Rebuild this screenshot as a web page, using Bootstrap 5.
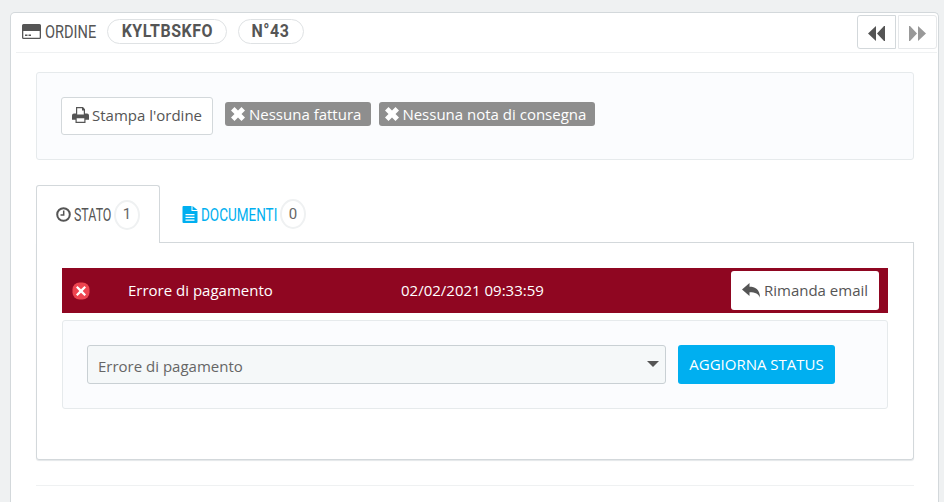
<!DOCTYPE html>
<html lang="it">
<head>
  <meta charset="UTF-8">
  <title>Ordine</title>
  <link href="https://cdn.jsdelivr.net/npm/bootstrap@5.3.3/dist/css/bootstrap.min.css" rel="stylesheet">
  <style>
    html, body { height: 100%; overflow: hidden; }
    body { background: #eff1f2; font-family: "Open Sans", sans-serif; font-size: 15px; color: #555; padding: 12px 5px 0 10px; }
    .order-panel { background: #fff; border: 1px solid #d3d8db; border-bottom: 0; border-radius: 5px 5px 0 0; height: 100%; padding: 0 1px 0 5px; }
    .panel-head { height: 40px; border-bottom: 1px solid #eff1f2; padding: 0 0 2px 6px; }
    /* no condensed face installed: Roboto squeezed to the widths of the reference */
    .narrow { font-family: Roboto, sans-serif; white-space: nowrap; display: inline-block; transform-origin: left center; }
    .head-title { font-size: 18px; color: #555; width: 51px; margin: 0 11px 0 4px; transform: scaleX(.81); }
    .pill-ref { border: 1px solid #dfe2e4; border-radius: 13px; height: 25px; width: 120px; }
    .pill-num { width: 66px; margin-left: 11px; }
    .pill-ref .narrow { font-size: 19px; font-weight: 700; color: #555; letter-spacing: .6px; transform: scaleX(.84); transform-origin: center; }
    .nav-btn { width: 39px; height: 34px; background: #fff; border: 1px solid #d3d8db; border-radius: 3px 0 0 3px; }
    .nav-btn + .nav-btn { border-color: #e6e8ea; border-radius: 0 3px 3px 0; margin-left: 2px; }
    .soft-well { background: #fbfcfe; border: 1px solid #e6eaec; border-radius: 3px; }
    .well-top { margin: 19px 0 0 20px; width: 878px; height: 88px; padding-left: 24px; }
    .print-btn { height: 38px; width: 152px; background: #fff; border: 1px solid #d3d8db; border-radius: 3px; color: #555; font-size: 15px; padding: 0 0 2px; gap: 3px; }
    .grey-tag { background: #8e8e8e; color: #fff; height: 24px; border-radius: 3px; padding: 0 10px 0 6px; font-size: 15px; margin: 0 0 4px 12px; gap: 4px; }
    .grey-tag + .grey-tag { margin-left: 8px; padding-right: 9px; gap: 3px; }
    .tab-row { margin: 25px 0 0 20px; width: 878px; height: 58px; border-bottom: 1px solid #d3d8db; }
    .tab-item { height: 58px; padding-left: 19px; font-size: 18px; }
    .tab-on { width: 124px; background: #fff; border: 1px solid #d3d8db; border-bottom: 0; border-radius: 3px 3px 0 0; color: #555; }
    .tab-off { color: #00aff0; padding-left: 22px; }
    .tab-on .narrow { width: 37px; transform: scaleX(.69); }
    .tab-off .narrow { width: 76px; transform: scaleX(.75); }
    .tab-icon { margin-right: 3px; }
    .count-dot { width: 26px; height: 30px; border: 2px solid #eff1f2; border-radius: 50%; color: #666; font-family: Roboto, sans-serif; font-size: 15px; margin-left: 3px; background: #fff; }
    .tab-body { margin-left: 20px; width: 878px; height: 217px; border: 1px solid #d3d8db; border-top: 0; border-radius: 0 0 3px 3px; padding: 25px 25px 0; box-shadow: 0 1px 1px #e4e7e9; }
    .state-bar { height: 45px; background: #8f0621; color: #fff; font-size: 15px; }
    .state-icon { margin-left: 10px; width: 56px; }
    .state-name { width: 273px; }
    .state-date { width: 330px; }
    .mail-btn { width: 148px; height: 39px; background: #fff; border: 0; border-radius: 3px; color: #555; font-size: 15px; padding: 0; gap: 4px; }
    .well-state { margin-top: 7px; height: 89px; padding: 24px 0 0 24px; }
    .state-select { width: 579px; height: 39px; background: #f5f8f9; border: 1px solid #c9d0d4; border-radius: 3px; padding: 4px 6px 0 10px; color: #666; font-size: 15px; }
    .caret-down { width: 0; height: 0; margin-top: -6px; border-left: 6px solid transparent; border-right: 6px solid transparent; border-top: 6px solid #555; }
    .send-btn { width: 157px; height: 39px; margin-left: 12px; background: #00aff0; border: 0; border-radius: 3px; color: #fff; font-size: 15px; padding: 0; }
    .foot-line { margin: 25px 0 0 20px; width: 878px; border: 0; border-top: 1px solid #eff1f2; opacity: 1; }
    svg { display: inline-block; flex-shrink: 0; }
  </style>
</head>
<body>

<div class="order-panel">
  <div class="panel-head d-flex align-items-center">
    <svg width="19" height="15" viewBox="0 0 19 15"><path fill="#555" fill-rule="evenodd" d="M1.500 0h16A1.500 1.500 0 0 1 19 1.500v12a1.500 1.500 0 0 1-1.500 1.500h-16A1.500 1.500 0 0 1 0 13.500v-12A1.500 1.500 0 0 1 1.500 0zM1.300 7v6.700h16.400V7zM3 10.500h2.500v1.500H3zM6.500 10.500H9v1.500H6.500z"/></svg>
    <span class="narrow head-title">ORDINE</span>
    <span class="pill-ref d-flex align-items-center justify-content-center"><span class="narrow">KYLTBSKFO</span></span>
    <span class="pill-ref pill-num d-flex align-items-center justify-content-center"><span class="narrow">N°43</span></span>
    <div class="d-flex ms-auto">
      <button class="nav-btn p-0" type="button"><svg width="17" height="15" viewBox="0 0 17 14" preserveAspectRatio="none"><path fill="#555" d="M8 0v14L0 7zM16 0h1v14h-1L9 7z"/></svg></button>
      <button class="nav-btn p-0" type="button"><svg width="17" height="15" viewBox="0 0 17 14" preserveAspectRatio="none"><path fill="#999" d="M0 0h1l7 7-7 7H0zM9 0l8 7-8 7z"/></svg></button>
    </div>
  </div>

  <div class="soft-well well-top d-flex align-items-center">
    <button class="print-btn d-inline-flex align-items-center justify-content-center" type="button">
      <svg width="17" height="16" viewBox="0 0 17 15" preserveAspectRatio="none"><path fill="#555" fill-rule="evenodd" d="M4 0h7l2 2v4h2a2 2 0 0 1 2 2v4h-3.500v3h-10v-3H0V8a2 2 0 0 1 2-2h2zM5.200 1.200V7h6.600V3.200h-1.800V1.200zM4.700 10.500v3.300h7.600v-3.300z"/></svg>
      <span>Stampa l'ordine</span>
    </button>
    <span class="grey-tag d-inline-flex align-items-center"><svg width="14" height="14" viewBox="0 0 14 14"><path fill="#fff" d="M3.500 0 7 3.500 10.500 0 14 3.500 10.500 7 14 10.500 10.500 14 7 10.500 3.500 14 0 10.500 3.500 7 0 3.500z"/></svg>Nessuna fattura</span>
    <span class="grey-tag d-inline-flex align-items-center"><svg width="14" height="14" viewBox="0 0 14 14"><path fill="#fff" d="M3.500 0 7 3.500 10.500 0 14 3.500 10.500 7 14 10.500 10.500 14 7 10.500 3.500 14 0 10.500 3.500 7 0 3.500z"/></svg>Nessuna nota di consegna</span>
  </div>

  <div class="tab-row d-flex">
    <div class="tab-item tab-on d-flex align-items-center">
      <svg class="tab-icon" width="15" height="15" viewBox="0 0 15 15"><circle cx="7.500" cy="7.500" r="6.300" fill="none" stroke="#555" stroke-width="2"/><path fill="none" stroke="#555" stroke-width="1.500" d="M7.700 3.500v4.500H4.500"/></svg>
      <span class="narrow">STATO</span><span class="count-dot d-flex align-items-center justify-content-center">1</span>
    </div>
    <div class="tab-item tab-off d-flex align-items-center">
      <svg class="tab-icon" width="16" height="17" viewBox="0 0 15 17"><path fill="#00aff0" fill-rule="evenodd" d="M1 0h8v5h6v11a1 1 0 0 1-1 1H1a1 1 0 0 1-1-1V1a1 1 0 0 1 1-1zM10 0l5 4h-5zM3 8v1.300h9V8zM3 10.800v1.300h9v-1.300zM3 13.500v1.300h9v-1.300z"/></svg>
      <span class="narrow">DOCUMENTI</span><span class="count-dot d-flex align-items-center justify-content-center">0</span>
    </div>
  </div>

  <div class="tab-body">
    <div class="state-bar d-flex align-items-center">
      <div class="state-icon d-flex">
        <svg width="18" height="18" viewBox="0 0 18 18"><rect x=".5" y=".5" width="17" height="17" rx="7" fill="#ee4450"/><path fill="#fff" d="M5.500 4 9 7.200 12.500 4 14 5.500 10.700 9 14 12.500 12.500 14 9 10.800 5.500 14 4 12.500 7.300 9 4 5.500z"/></svg>
      </div>
      <div class="state-name">Errore di pagamento</div>
      <div class="state-date">02/02/2021 09:33:59</div>
      <button class="mail-btn d-inline-flex align-items-center justify-content-center" type="button">
        <svg width="18" height="15" viewBox="0 0 18 15"><path fill="#555" d="M7.500 0v3.800c5.500 0 10.500 2.500 10.500 11-1.500-4-4.500-5.500-10.500-5.500V13L0 6.500z"/></svg>
        <span>Rimanda email</span>
      </button>
    </div>
    <div class="soft-well well-state d-flex">
      <div class="state-select d-flex align-items-center justify-content-between">
        <span>Errore di pagamento</span>
        <span class="caret-down"></span>
      </div>
      <button class="send-btn" type="button">AGGIORNA STATUS</button>
    </div>
  </div>

  <hr class="foot-line">
</div>

<script src="https://cdn.jsdelivr.net/npm/bootstrap@5.3.3/dist/js/bootstrap.bundle.min.js"></script>
</body>
</html>
